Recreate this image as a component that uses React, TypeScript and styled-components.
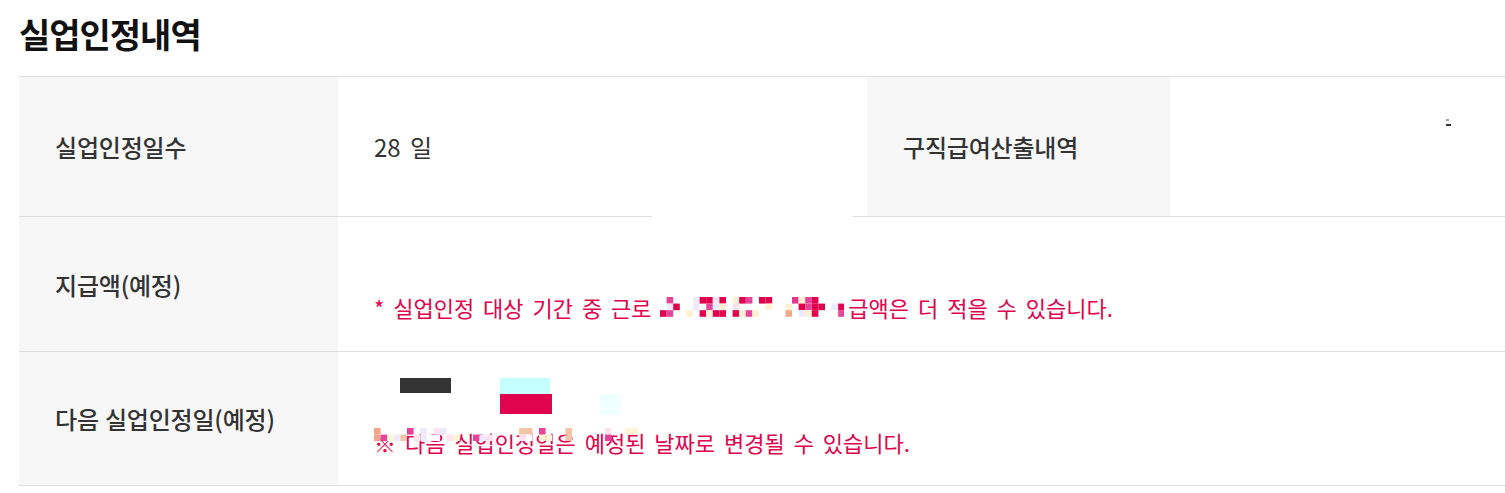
import React from "react";
import styled, { createGlobalStyle } from "styled-components";

const GlobalStyle = createGlobalStyle`
  body {
    margin: 0;
    background: #fff;
    font-family: "Noto Sans CJK KR", "Noto Sans", sans-serif;
    overflow: hidden;
  }
`;

const Page = styled.div`
  padding: 0 0 0 19px;
`;

const Title = styled.h2`
  margin: 0;
  height: 76px;
  padding-top: 10px;
  box-sizing: border-box;
  font-size: 34px;
  line-height: 48px;
  font-weight: 700;
  letter-spacing: -1px;
  color: #111;
`;

const Table = styled.div`
  border-top: 1px solid #dddddd;
`;

const Row = styled.div<{ $height: number }>`
  display: grid;
  grid-template-columns: 319px 529px 303px 1fr;
  min-height: ${(p) => p.$height}px;
  border-bottom: 1px solid #dddddd;
`;

const HeaderCell = styled.div`
  background: #f7f7f7;
  display: flex;
  align-items: center;
  padding-left: 36px;
  font-size: 24px;
  font-weight: 500;
  letter-spacing: -0.2px;
  word-spacing: 1px;
  color: #333;
`;

const ValueCell = styled.div<{ $wide?: boolean }>`
  position: relative;
  grid-column: ${(p) => (p.$wide ? "2 / 5" : "auto")};
  display: flex;
  flex-direction: column;
  justify-content: center;
  padding-left: 36px;
  font-size: 24px;
  word-spacing: 4px;
  color: #333;
`;

const Line = styled.div`
  height: 46px;
  display: flex;
  align-items: center;
`;

const Note = styled(Line)`
  font-size: 22px;
  word-spacing: 4px;
  color: #e0004d;
  white-space: nowrap;
  position: relative;
`;

const Redacted = styled.span<{ $color: string; $w: number; $h: number }>`
  display: inline-block;
  width: ${(p) => p.$w}px;
  height: ${(p) => p.$h}px;
  background: ${(p) => p.$color};
`;

const DateBlocks = styled.div`
  display: flex;
  align-items: flex-start;
  padding-left: 26px;
  padding-top: 2px;
`;

const Stack = styled.div`
  display: flex;
  flex-direction: column;
`;

const WhitePatch = styled.div`
  position: absolute;
  left: 314px;
  bottom: -1px;
  width: 201px;
  height: 2px;
  background: #fff;
`;

const Specks = styled.div`
  position: absolute;
  right: 54px;
  top: 42px;
  display: flex;
  flex-direction: column;
  gap: 3px;
`;

const Speck = styled.span<{ $color: string; $w: number }>`
  display: block;
  width: ${(p) => p.$w}px;
  height: 2px;
  background: ${(p) => p.$color};
`;

const MosaicStrip = styled.div`
  position: absolute;
  left: 0;
  top: 9px;
  line-height: 0;
`;

const hot = ["#e0004d", "#e0004d", "#e0004d", "#e6449a", "#e33a8f", "#f5a98a", "#fde3ee", "#fff1d2", "#eeeafd"];
const pale = ["#ffffff", "#ffffff", "#fde3ee", "#f5c3a6", "#fff5d6", "#efe9fd", "#e6449a", "#f3a58c"];

function Mosaic({
  cols,
  rows,
  cell,
  seed,
  colors,
  gaps = [],
  fill = 0.5,
  margin = "0 4px 0 8px",
}: {
  cols: number;
  rows: number;
  cell: number;
  seed: number;
  colors: string[];
  gaps?: number[];
  fill?: number;
  margin?: string;
}) {
  let s = seed;
  const rand = () => {
    s = (s * 9301 + 49297) % 233280;
    return s / 233280;
  };
  const rects: React.ReactNode[] = [];
  for (let r = 0; r < rows; r++) {
    for (let c = 0; c < cols; c++) {
      const v = rand();
      const k = Math.floor(rand() * colors.length);
      if (gaps.includes(c) || v > fill) continue;
      rects.push(<rect key={`${r}-${c}`} x={c * cell} y={r * cell} width={cell} height={cell} fill={colors[k]} />);
    }
  }
  return (
    <svg width={cols * cell} height={rows * cell} style={{ verticalAlign: "middle", margin }}>
      {rects}
    </svg>
  );
}

export default function App() {
  return (
    <Page>
      <GlobalStyle />
      <Title>실업인정내역</Title>
      <Table>
        <Row $height={139}>
          <HeaderCell>실업인정일수</HeaderCell>
          <ValueCell>
            28 일
            <WhitePatch />
          </ValueCell>
          <HeaderCell>구직급여산출내역</HeaderCell>
          <ValueCell>
            <Specks>
              <Speck $color="#9aa" $w={3} />
              <Speck $color="#334" $w={5} />
            </Specks>
          </ValueCell>
        </Row>
        <Row $height={134}>
          <HeaderCell>지급액(예정)</HeaderCell>
          <ValueCell $wide>
            <Line />
            <Note>
              * 실업인정 대상 기간 중 근로
              <Mosaic cols={28} rows={3} cell={6.6} seed={17} colors={hot} fill={0.6} gaps={[3, 10, 17, 18, 25]} />
              급액은 더 적을 수 있습니다.
            </Note>
          </ValueCell>
        </Row>
        <Row $height={133}>
          <HeaderCell>다음 실업인정일(예정)</HeaderCell>
          <ValueCell $wide>
            <Line>
              <DateBlocks>
                <Redacted $color="#333" $w={51} $h={15} />
                <Stack style={{ marginLeft: 49 }}>
                  <Redacted $color="#c4fffe" $w={50} $h={16} />
                  <Redacted $color="#e0034d" $w={52} $h={20} />
                </Stack>
                <Redacted $color="#f0ffff" $w={21} $h={21} style={{ marginLeft: 48, marginTop: 16 }} />
              </DateBlocks>
            </Line>
            <Note>
              ※ 다음 실업인정일은 예정된 날짜로 변경될 수 있습니다.
              <MosaicStrip>
                <Mosaic cols={40} rows={2} cell={6.6} seed={5} colors={pale} fill={0.45} margin="0" />
              </MosaicStrip>
            </Note>
          </ValueCell>
        </Row>
      </Table>
    </Page>
  );
}
